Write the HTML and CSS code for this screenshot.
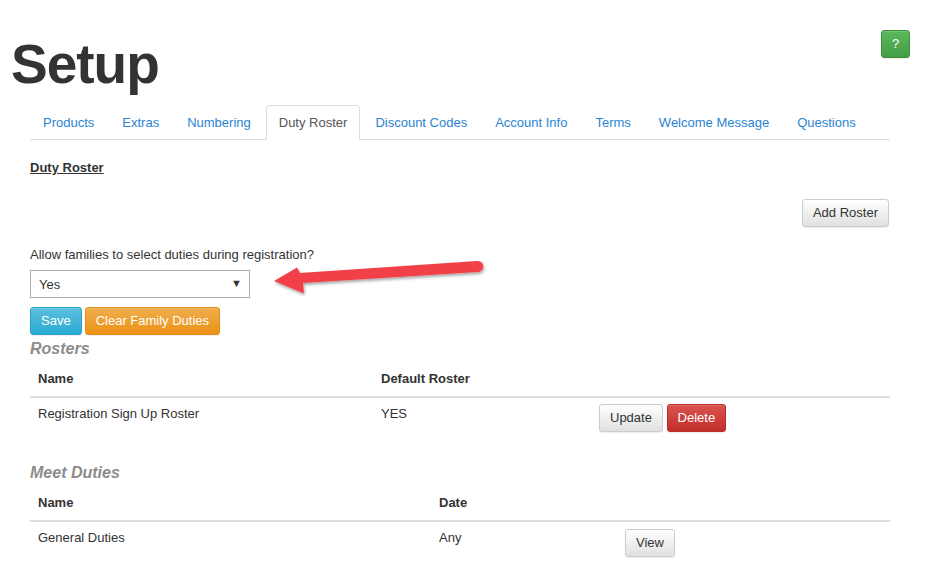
FILE: index.html
```html
<!DOCTYPE html>
<html>
<head>
  <meta charset="UTF-8">
  <title>Setup - Duty Roster</title>
  <link rel="stylesheet" href="styles.css">
</head>
<body>
  <div class="header">
    <h1 class="title">Setup</h1>
    <button class="btn btn-success btn-help">?</button>
  </div>

  <ul class="tabs">
    <li><a href="#">Products</a></li>
    <li><a href="#">Extras</a></li>
    <li><a href="#">Numbering</a></li>
    <li class="active"><a href="#">Duty Roster</a></li>
    <li><a href="#">Discount Codes</a></li>
    <li><a href="#">Account Info</a></li>
    <li><a href="#">Terms</a></li>
    <li><a href="#">Welcome Message</a></li>
    <li><a href="#">Questions</a></li>
  </ul>

  <div class="content">
    <div class="section-title">Duty Roster</div>

    <div class="toolbar">
      <button class="btn btn-default">Add Roster</button>
    </div>

    <label class="field-label">Allow families to select duties during registration?</label>
    <div class="select-wrap">
      <select class="select">
        <option>Yes</option>
        <option>No</option>
      </select>
    </div>

    <div class="actions">
      <button class="btn btn-info">Save</button>
      <button class="btn btn-warning">Clear Family Duties</button>
    </div>

    <h4 class="sub-heading">Rosters</h4>
    <table class="table table-rosters">
      <thead>
        <tr>
          <th class="col-a">Name</th>
          <th class="col-b">Default Roster</th>
          <th></th>
        </tr>
      </thead>
      <tbody>
        <tr>
          <td>Registration Sign Up Roster</td>
          <td>YES</td>
          <td class="cell-btns">
            <button class="btn btn-default">Update</button>
            <button class="btn btn-danger">Delete</button>
          </td>
        </tr>
      </tbody>
    </table>

    <h4 class="sub-heading meet">Meet Duties</h4>
    <table class="table table-duties">
      <thead>
        <tr>
          <th class="col-a">Name</th>
          <th class="col-b">Date</th>
          <th></th>
        </tr>
      </thead>
      <tbody>
        <tr>
          <td>General Duties</td>
          <td>Any</td>
          <td class="cell-btns">
            <button class="btn btn-default">View</button>
          </td>
        </tr>
      </tbody>
    </table>
  </div>

  <!-- annotation arrow pointing at the select -->
  <svg class="arrow" width="945" height="575" viewBox="0 0 945 575">
    <defs>
      <filter id="shadow" x="-10%" y="-50%" width="120%" height="200%">
        <feDropShadow dx="1" dy="2" stdDeviation="1.5" flood-color="#000" flood-opacity="0.35"/>
      </filter>
    </defs>
    <path filter="url(#shadow)" fill="#f2404a"
          d="M274 281 L297 267.5 L300 273 L477 261 A5.5 5.5 0 0 1 478.5 272 L303 283 L304 293.5 Z"/>
  </svg>
</body>
</html>
```

FILE: styles.css
```css
body {
  margin: 0;
  font-family: "Liberation Sans", Arial, sans-serif;
  font-size: 13px;
  color: #333;
  background: #fff;
}

.header {
  display: flex;
  justify-content: space-between;
  align-items: flex-start;
  padding: 0 35px 0 11px;
}

.title {
  margin: 32px 0 0 0;
  font-size: 55px;
  line-height: 64px;
  font-weight: bold;
  letter-spacing: -1px;
  color: #333;
}

.btn-help {
  margin-top: 30px;
  width: 29px;
  height: 28px;
  padding: 0;
  font-size: 12px;
}

/* tabs */
.tabs {
  list-style: none;
  display: flex;
  margin: 9px 55px 0 30px;
  padding: 0;
  border-bottom: 1px solid #ddd;
}

.tabs li {
  margin: 0 2px -1px 0;
}

.tabs a {
  display: block;
  padding: 8px 12px;
  line-height: 17px;
  border: 1px solid transparent;
  border-radius: 4px 4px 0 0;
  color: #2a84d2;
  text-decoration: none;
}

.tabs .active a {
  color: #555;
  background: #fff;
  border-color: #ddd #ddd transparent;
}

.content {
  padding: 0 55px 0 30px;
}

.section-title {
  margin-top: 19px;
  line-height: 18px;
  font-weight: bold;
  text-decoration: underline;
}

.toolbar {
  display: flex;
  justify-content: flex-end;
  margin-top: 22px;
  padding-right: 1px;
}

.field-label {
  display: block;
  margin-top: 19px;
  line-height: 18px;
}

.select-wrap {
  position: relative;
  width: 220px;
  margin-top: 6px;
}

.select-wrap::after {
  content: "\25BC";
  position: absolute;
  right: 8px;
  top: 7px;
  font-size: 11px;
  color: #333;
  pointer-events: none;
}

.select {
  -webkit-appearance: none;
  appearance: none;
  width: 220px;
  height: 28px;
  padding: 0 8px;
  border: 1px solid #aaa;
  border-radius: 0;
  background: #fff;
  font-family: inherit;
  font-size: 13px;
  color: #333;
}

.actions {
  display: flex;
  gap: 3px;
  margin-top: 9px;
}

/* buttons */
.btn {
  font-family: inherit;
  font-size: 13px;
  line-height: 18px;
  padding: 4px 10px;
  border: 1px solid #ccc;
  border-radius: 3px;
  cursor: pointer;
  box-shadow: inset 0 1px 0 rgba(255,255,255,0.15), 0 1px 1px rgba(0,0,0,0.075);
}

.btn-default {
  color: #333;
  background: linear-gradient(#fff, #e0e0e0);
  border-color: #ccc;
}

.btn-info {
  color: #fff;
  background: linear-gradient(#5bc0de, #2aabd2);
  border-color: #28a4c9;
}

.btn-warning {
  color: #fff;
  background: linear-gradient(#f0ad4e, #eb9316);
  border-color: #e38d13;
}

.btn-danger {
  color: #fff;
  background: linear-gradient(#d9534f, #c12e2a);
  border-color: #b92c28;
}

.btn-success {
  color: #fff;
  background: linear-gradient(#5cb85c, #449d44);
  border-color: #3e8f3e;
}

.sub-heading {
  margin: 4px 0 0 0;
  font-size: 16px;
  line-height: 20px;
  font-style: italic;
  font-weight: bold;
  color: #8c8c8c;
}

.sub-heading.meet {
  margin-top: 25px;
}

/* tables */
.table {
  width: 100%;
  border-collapse: collapse;
  margin-top: 3px;
}

.table th {
  text-align: left;
  padding: 8px;
  line-height: 18px;
  border-bottom: 2px solid #ddd;
  font-weight: bold;
}

.table td {
  vertical-align: top;
  padding: 7px 8px 6px;
  line-height: 18px;
}

.table td.cell-btns {
  padding-top: 6px;
}

.table-duties td {
  padding-top: 7px;
}

.table-duties td.cell-btns {
  padding-top: 7px;
}

.table-rosters .col-a { width: 327px; }
.table-rosters .col-b { width: 202px; }

.table-duties .col-a { width: 385px; }
.table-duties .col-b { width: 170px; }

.arrow {
  position: absolute;
  left: 0;
  top: 0;
  pointer-events: none;
}
```
